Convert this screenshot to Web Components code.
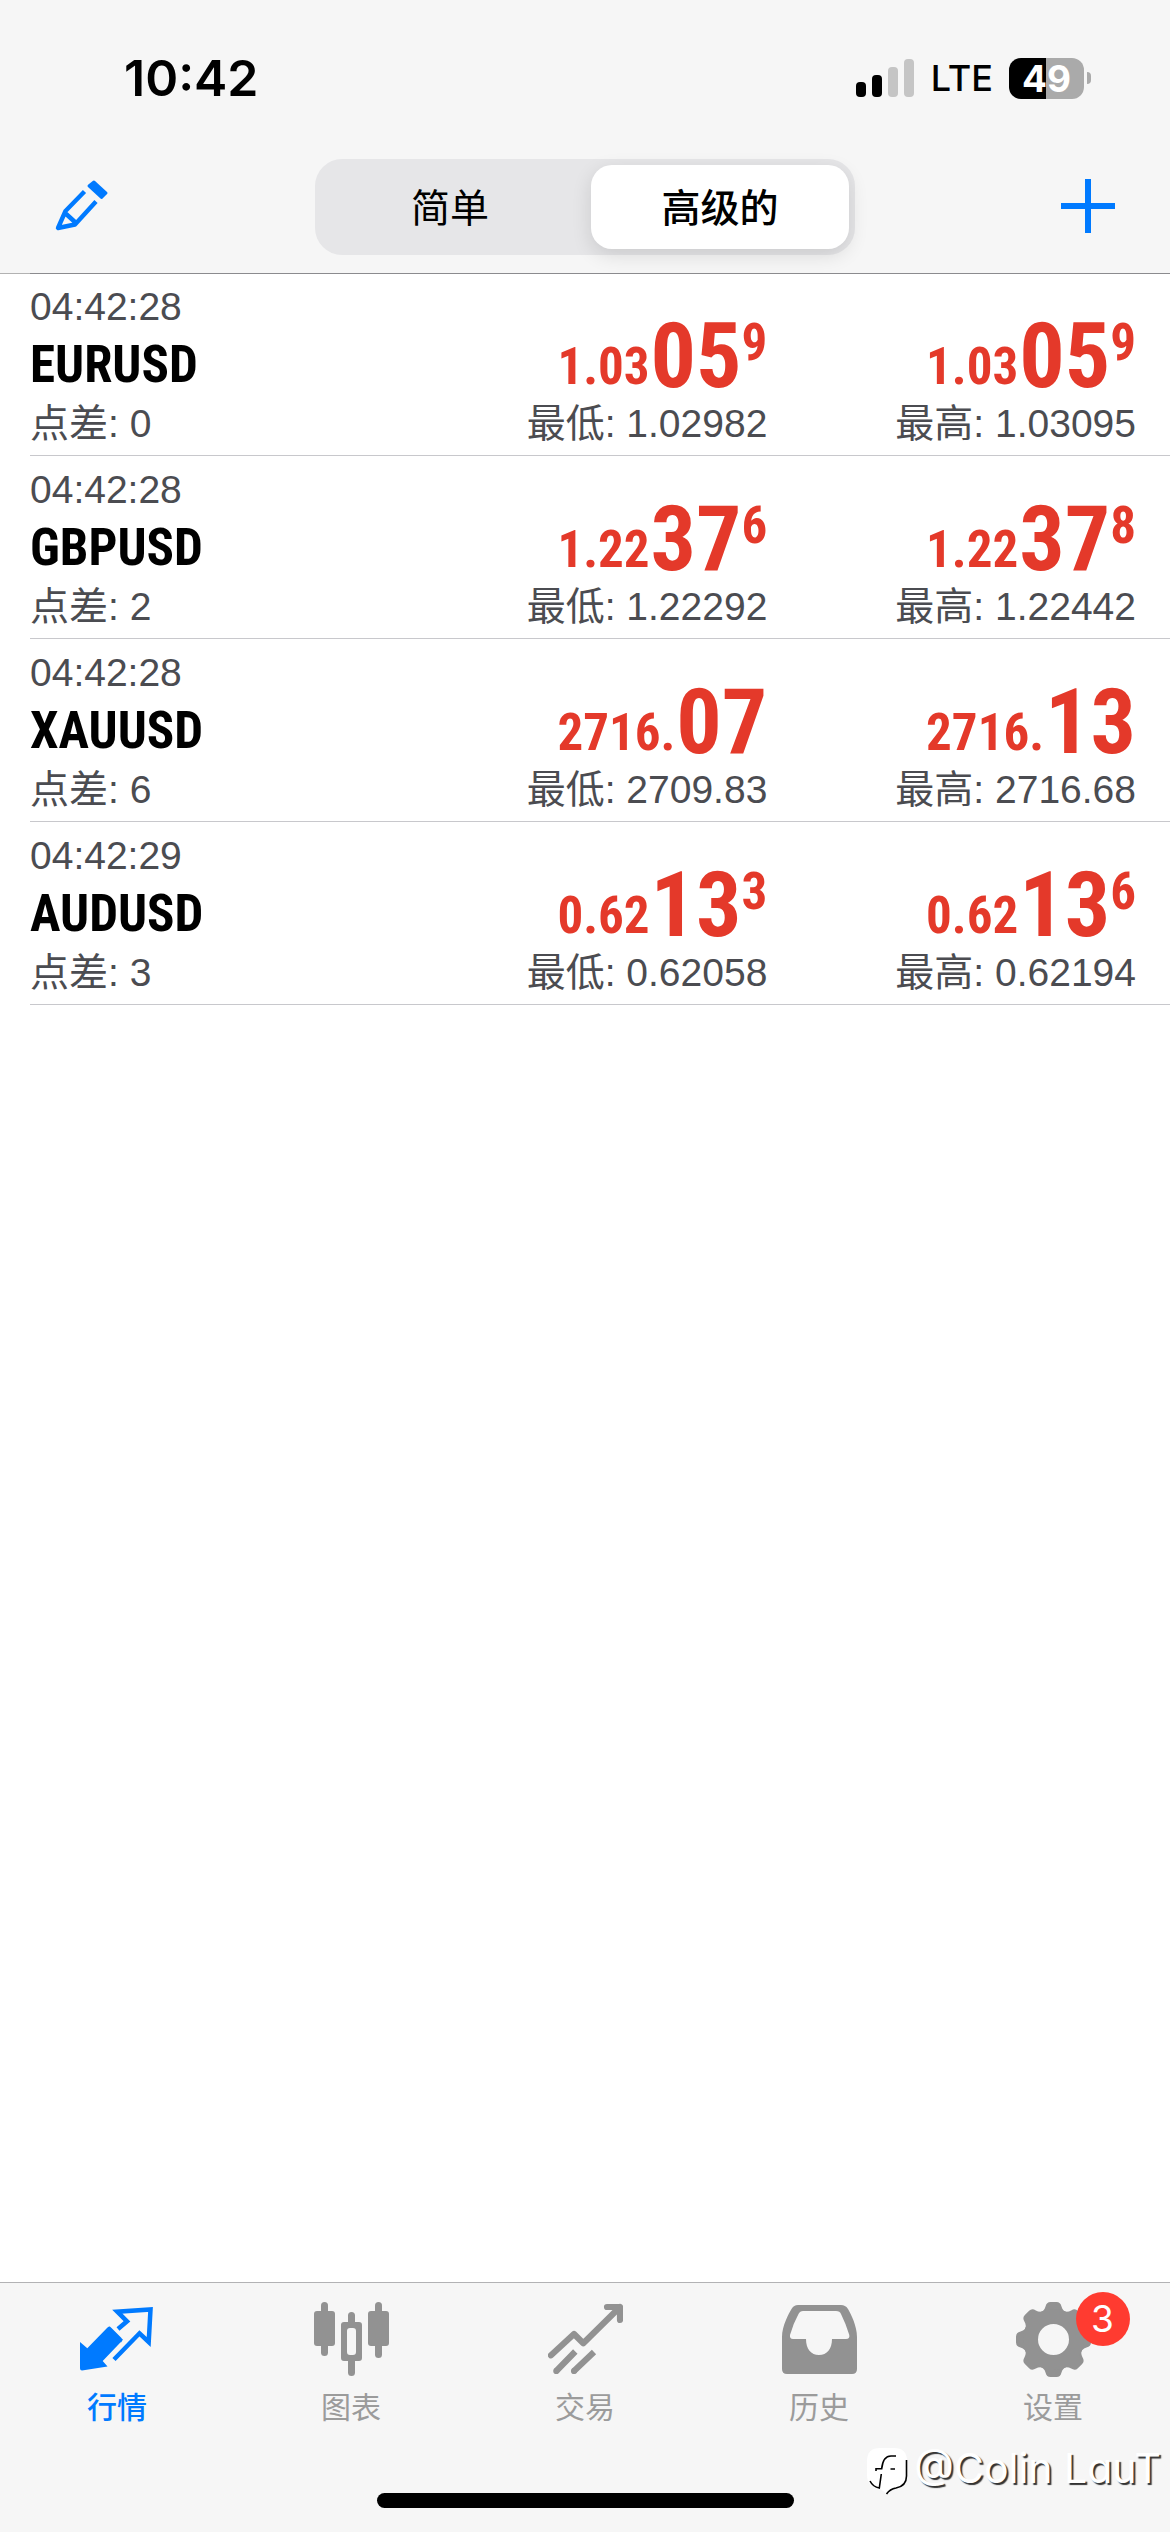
<!DOCTYPE html>
<html lang="zh-CN">
<head>
<meta charset="utf-8">
<meta name="viewport" content="width=device-width, initial-scale=1">
<title>行情</title>
<style>
  body { margin: 0; background: #fff; color: #000; font-family: "Liberation Sans", "Noto Sans CJK SC", sans-serif; }
</style>
</head>
<body>
<quotes-app></quotes-app>
<script>
  const define = (name, html, setup) => {
    const template = document.createElement('template');
    template.innerHTML = html;
    customElements.define(name, class extends HTMLElement {
      constructor() {
        super();
        this.attachShadow({ mode: 'open' }).append(template.content.cloneNode(true));
      }
      connectedCallback() { if (setup) setup(this, this.shadowRoot); }
    });
  };

  define('status-bar', `
    <style>
      :host { display: flex; align-items: center; justify-content: space-between; height: 156px; padding: 0 79px 0 124px; font-family: Inter, sans-serif; }
      time { font-size: 50px; font-weight: 600; line-height: 60px; }
      .right { display: flex; align-items: center; }
      .bars { width: 58px; height: 38px; margin-right: 17px; }
      .net { font-size: 36px; font-weight: 500; line-height: 48px; margin-right: 16px; }
      .battery { width: 75px; height: 41px; border-radius: 12px; background: linear-gradient(90deg, #000 50%, #aaa 50%); color: #fff; font-size: 37px; font-weight: 700; line-height: 41px; text-align: center; }
      .nub { width: 4px; height: 12px; margin-left: 3px; border-radius: 0 6px 6px 0; background: #aaa; }
    </style>
    <time>10:42</time>
    <div class="right">
      <svg class="bars" viewBox="0 0 58 38" aria-hidden="true">
        <rect y="23" width="10" height="15" rx="4"/><rect x="16" y="16" width="10" height="22" rx="4"/>
        <rect x="32" y="8" width="10" height="30" rx="4" fill="#c5c5c5"/><rect x="48" width="10" height="38" rx="4" fill="#c5c5c5"/>
      </svg>
      <span class="net">LTE</span>
      <div class="battery">49</div><div class="nub"></div>
    </div>`);

  define('segmented-control', `
    <style>
      :host { display: grid; grid-template-columns: 1fr 1fr; box-sizing: border-box; width: 540px; height: 96px; padding: 6px; border-radius: 27px; background: #e6e6e8; }
      button { border: 0; margin: 0 6px 0 0; padding: 0 0 4px; border-radius: 21px; background: none; color: #000; font: 400 39px/56px "Noto Sans CJK SC", sans-serif; }
      button[aria-pressed="true"] { margin: 0 0 0 6px; background: #fff; font-weight: 500; box-shadow: 0 6px 20px rgba(0,0,0,.12); }
    </style>
    <button type="button" aria-pressed="false">简单</button>
    <button type="button" aria-pressed="true">高级的</button>`);

  define('nav-bar', `
    <style>
      :host { display: flex; align-items: center; justify-content: space-between; height: 102px; padding: 0 55px 15px; }
      button { display: flex; border: 0; margin: 0; padding: 0 0 2px; background: none; color: #007aff; }
      svg { width: 54px; height: 54px; }
    </style>
    <button type="button" aria-label="编辑">
      <svg viewBox="0 0 54 54" fill="none" stroke="currentColor" stroke-width="4.4" stroke-linejoin="round">
        <path d="M29.5 12.5 10.5 32 3 49 20 45.500 41 22.500M9.500 33.500 20.500 43.500"/>
        <path d="M39 3 51 14 46.500 18.500 34 7Z" fill="currentColor" stroke-width="3"/>
      </svg>
    </button>
    <segmented-control></segmented-control>
    <button type="button" aria-label="添加">
      <svg viewBox="0 0 54 54" fill="currentColor"><path d="M24 0h6v24h24v6H30v24h-6V30H0v-6h24z"/></svg>
    </button>`);

  define('price-figure', `
    <style>
      :host { display: flex; justify-content: flex-end; height: 60px; color: #e4392a; font-family: "Roboto Condensed", "Liberation Sans", sans-serif; font-weight: 700; white-space: nowrap; }
      .lead { align-self: flex-end; font-size: 51px; line-height: 38px; margin-right: 1px; }
      .main { font-size: 90px; line-height: 62px; }
      .pip { font-size: 51px; line-height: 34px; }
      .pip:empty { display: none; }
    </style>
    <span class="lead"></span><span class="main"></span><span class="pip"></span>`,
    (el, root) => {
      const [lead, main, pip] = el.getAttribute('value').split('|');
      root.querySelector('.lead').textContent = lead;
      root.querySelector('.main').textContent = main;
      root.querySelector('.pip').textContent = pip || '';
    });

  define('quote-row', `
    <style>
      :host { display: grid; grid-template-columns: repeat(3, 1fr); grid-template-rows: 40px 75px 45px; padding: 13px 34px 9px 0; border-bottom: 1px solid #c8c8cc; color: #4b4c51; font-size: 39px; line-height: 45px; }
      time { grid-column: 1 / -1; line-height: 42px; }
      .symbol { color: #000; font: 700 51px/78px "Roboto Condensed", Roboto, sans-serif; }
      .end { text-align: right; }
      .low, .high, .spread { white-space: nowrap; }
    </style>
    <time></time>
    <div class="symbol"></div><div class="bid"></div><div class="ask"></div>
    <div class="spread"></div><div class="low end"></div><div class="high end"></div>`,
    (el, root) => {
      const get = name => el.getAttribute(name);
      const put = (sel, text) => { root.querySelector(sel).textContent = text; };
      put('time', get('time'));
      put('.symbol', get('symbol'));
      put('.spread', '点差: ' + get('spread'));
      put('.low', '最低: ' + get('low'));
      put('.high', '最高: ' + get('high'));
      for (const side of ['bid', 'ask']) {
        const price = document.createElement('price-figure');
        price.setAttribute('value', get(side));
        root.querySelector('.' + side).replaceChildren(price);
      }
    });

  define('tab-item', `
    <style>
      :host { display: block; flex: 1; }
      a { display: flex; flex-direction: column; align-items: center; color: #929292; text-decoration: none; font: 400 30px/40px "Noto Sans CJK SC", sans-serif; }
      :host([active]) a { color: #007aff; }
      .label { margin-top: 8px; opacity: .9; }
      :host([active]) .label { font-weight: 500; opacity: 1; }
      .icon { position: relative; display: flex; }
      ::slotted(svg) { width: 75px; height: 75px; }
      .badge { position: absolute; left: 60px; top: -10px; width: 54px; height: 54px; border-radius: 50%; background: #ff3b30; color: #fff; font: 400 37px/54px Inter, sans-serif; text-align: center; }
      .badge:empty { display: none; }
    </style>
    <a href="#"><span class="icon"><slot></slot><span class="badge"></span></span><span class="label"></span></a>`,
    (el, root) => {
      root.querySelector('.label').textContent = el.getAttribute('label');
      root.querySelector('.badge').textContent = el.getAttribute('badge') || '';
    });

  define('tab-bar', `
    <style>
      :host { display: flex; flex-direction: column; justify-content: space-between; align-items: center; box-sizing: border-box; height: 250px; padding: 19px 0 24px; border-top: 1px solid #b2b2b4; background: #f6f6f6; }
      nav { display: flex; width: 100%; }
      .home { width: 417px; height: 15px; border-radius: 8px; background: #000; }
    </style>
    <nav>
      <tab-item label="行情" active>
        <svg viewBox="0 0 75 75" fill="none">
          <path d="M29.300 24 43 37.700 22.700 59 27.500 64.500 2 68.500Q0 68.500 0 66.500V40L7.300 46.300 27 26Q29.300 23 31.500 26L41 35.500Q43.500 38 41 40.500Z" fill="currentColor"/>
          <path d="M38 27 47 19.300 37.300 9.700 70.500 7.500 68.700 40 59.500 31.300 34 57.500" stroke="currentColor" stroke-width="4.500"/>
        </svg>
      </tab-item>
      <tab-item label="图表">
        <svg viewBox="0 0 75 75" fill="currentColor">
          <rect x="7" width="7" height="54" rx="3.500"/><rect y="9" width="21" height="35" rx="3"/>
          <rect x="61" width="7" height="56" rx="3.500"/><rect x="54" y="9" width="21" height="35" rx="3"/>
          <path d="M34 20V13.500a3.500 3.500 0 0 1 7 0V20h4a3 3 0 0 1 3 3V56a3 3 0 0 1-3 3H41V70.500a3.500 3.500 0 0 1-7 0V59H30a3 3 0 0 1-3-3V23a3 3 0 0 1 3-3ZM36 26a3 3 0 0 0-3 3V50a3 3 0 0 0 3 3h3a3 3 0 0 0 3-3V29a3 3 0 0 0-3-3Z" fill-rule="evenodd"/>
        </svg>
      </tab-item>
      <tab-item label="交易">
        <svg viewBox="0 0 75 75" fill="none" stroke="currentColor" stroke-width="6.200" stroke-linejoin="round">
          <path d="M3 53.300 26 32 35.300 41.300 72 5M59 5H72V18" stroke-linecap="round"/>
          <path d="M27.300 49.500 8.300 69M46 50 26 69"/>
          <path d="M8.300 69h0M26 69h0" stroke-linecap="round"/>
        </svg>
      </tab-item>
      <tab-item label="历史">
        <svg viewBox="0 0 75 75" fill="currentColor">
          <path fill-rule="evenodd" d="M0 35C0 24 7 11 9.500 7 11.500 4 13 3 16 3H59C62 3 64 4 66 7 69 12 75 24 75 35V67Q75 72 70 72H5Q0 72 0 67ZM21 9Q18 9 16.500 12 11 22 8 33 7.500 37 11 37H24C24 47 29 53 37 53S50 47 50 37H64Q68 37 67.300 33 64 22 59 12 58 9 54 9Z"/>
        </svg>
      </tab-item>
      <tab-item label="设置" badge="3">
        <svg viewBox="0 0 75 75" fill="currentColor">
          <g id="teeth"></g>
          <circle cx="37.500" cy="37.500" r="23" fill="none" stroke="currentColor" stroke-width="15"/>
        </svg>
      </tab-item>
    </nav>
    <div class="home"></div>`,
    (el, root) => {
      const teeth = root.querySelector('#teeth');
      for (let i = 0; i < 8; i++) {
        const tooth = document.createElementNS('http://www.w3.org/2000/svg', 'path');
        tooth.setAttribute('d', 'M24 11Q28.500 8.500 29.500 4.500 30.500 0 34.500 0H40.500Q44.500 0 45.500 4.500 46.500 8.500 51 11L46 17H29Z');
        tooth.setAttribute('transform', `rotate(${i * 45} 37.5 37.5)`);
        teeth.append(tooth);
      }
    });

  define('author-mark', `
    <style>
      :host { display: flex; align-items: flex-start; gap: 5px; color: #fff; font: 400 41px/40px Inter, sans-serif; font-feature-settings: "cv11"; text-shadow: 2px 2px 1px #333; white-space: nowrap; }
      svg { width: 42px; height: 48px; }
    </style>
    <svg viewBox="0 0 42 48" fill="none" aria-hidden="true">
      <path d="M13 0H27Q40 0 40 13V28Q40 38 29 40 24 41 20 46L12 40Q0 39 0 27V13Q0 0 13 0Z" fill="#fff"/>
      <path d="M3 33Q6 39 12.300 40L14.300 26M39.500 12V28Q39.500 38 29 40 23 41 19.500 46M29 8H24Q16 8 14.700 20.700H9V23M23.500 21H28" stroke="#000" stroke-width="1.600"/>
    </svg>
    <span>@Colin LauT</span>`);

  define('quotes-app', `
    <style>
      :host { display: flex; flex-direction: column; min-height: 100vh; position: relative; }
      header { position: relative; z-index: 1; background: #f6f6f6; box-shadow: 0 1px rgba(0,0,0,.3); }
      main { flex: 1; }
      .list { margin-left: 30px; box-shadow: inset 0 1px #c8c8cc; }
      author-mark { position: absolute; right: 9px; bottom: 36px; }
    </style>
    <header><status-bar></status-bar><nav-bar></nav-bar></header>
    <main><div class="list">
      <quote-row time="04:42:28" symbol="EURUSD" spread="0" bid="1.03|05|9" ask="1.03|05|9" low="1.02982" high="1.03095"></quote-row>
      <quote-row time="04:42:28" symbol="GBPUSD" spread="2" bid="1.22|37|6" ask="1.22|37|8" low="1.22292" high="1.22442"></quote-row>
      <quote-row time="04:42:28" symbol="XAUUSD" spread="6" bid="2716.|07" ask="2716.|13" low="2709.83" high="2716.68"></quote-row>
      <quote-row time="04:42:29" symbol="AUDUSD" spread="3" bid="0.62|13|3" ask="0.62|13|6" low="0.62058" high="0.62194"></quote-row>
    </div></main>
    <tab-bar></tab-bar>
    <author-mark></author-mark>`);
</script>
</body>
</html>
